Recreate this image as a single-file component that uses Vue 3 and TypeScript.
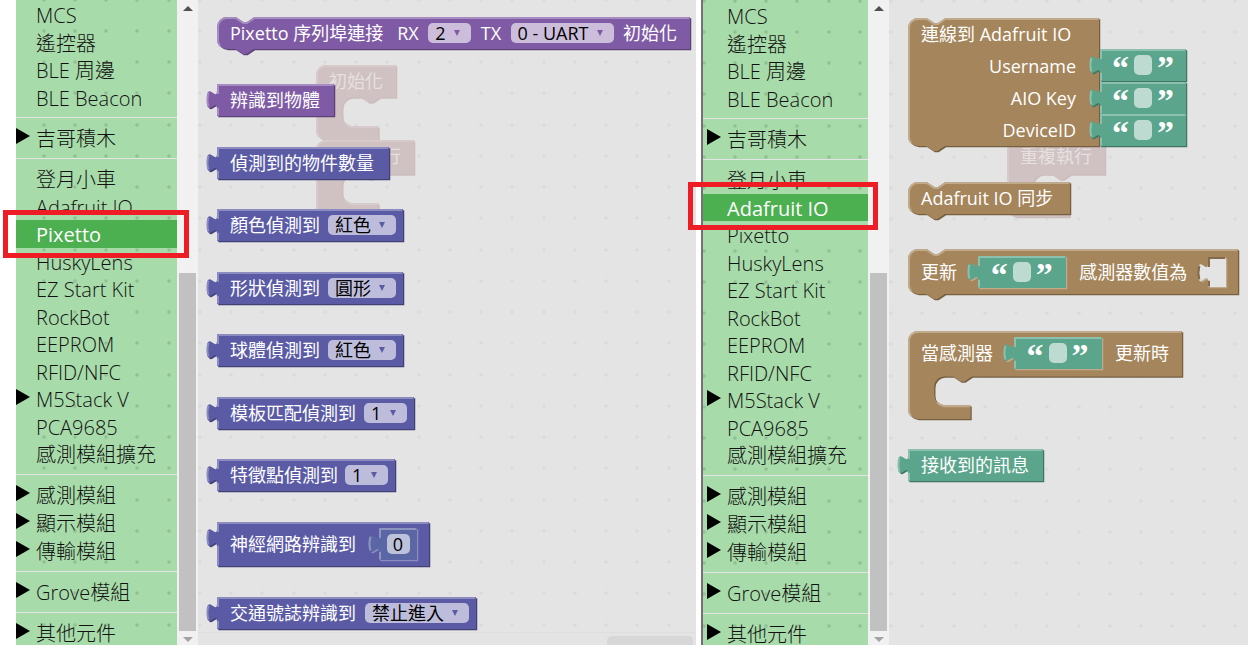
<script setup lang="ts">
import { h } from 'vue'

interface Item { name: string; parent?: boolean }
interface Part {
  kind: 'label' | 'select' | 'text' | 'number' | 'slot'
  value?: string
  nested?: boolean
}
interface Block {
  x: number
  y: number
  w: number
  h: number
  shape: 'stack' | 'value' | 'loop'
  tone: string
  parts: Part[]
  rows?: string[]
}
interface Ghost { x: number; y: number; w: number; h: number; text: string }
interface Panel {
  id: string
  selected: string
  dotX: number
  dotY: number
  blocks: Block[]
  ghosts: Ghost[]
}

const SCALE = 1.25

const groups: Item[][] = [
  [{ name: 'MCS' }, { name: '遙控器' }, { name: 'BLE 周邊' }, { name: 'BLE Beacon' }],
  [{ name: '吉哥積木', parent: true }],
  [
    { name: '登月小車' }, { name: 'Adafruit IO' }, { name: 'Pixetto' }, { name: 'HuskyLens' },
    { name: 'EZ Start Kit' }, { name: 'RockBot' }, { name: 'EEPROM' }, { name: 'RFID/NFC' },
    { name: 'M5Stack V', parent: true }, { name: 'PCA9685' }, { name: '感測模組擴充' },
  ],
  [{ name: '感測模組', parent: true }, { name: '顯示模組', parent: true }, { name: '傳輸模組', parent: true }],
  [{ name: 'Grove模組', parent: true }],
  [{ name: '其他元件', parent: true }],
]

const label = (value: string): Part => ({ kind: 'label', value })
const pick = (value: string): Part => ({ kind: 'select', value })
const value = (y: number, w: number, parts: Part[], tone = 'blue', height = 32): Block =>
  ({ x: 19, y, w, h: height, shape: 'value', tone, parts })
const quoted = (y: number): Block =>
  ({ x: 211, y, w: 86, h: 32, shape: 'value', tone: 'green', parts: [{ kind: 'text' }] })

const panels: Panel[] = [
  {
    id: 'pixetto',
    selected: 'Pixetto',
    dotX: 28,
    dotY: 0,
    ghosts: [
      { x: 118, y: 65, w: 80, h: 75, text: '初始化' },
      { x: 118, y: 140, w: 98, h: 77, text: '重複執行' },
    ],
    blocks: [
      {
        x: 19, y: 17, w: 473, h: 32, shape: 'stack', tone: 'purple',
        parts: [label('Pixetto 序列埠連接   RX'), pick('2'), label('TX'), pick('0 - UART'), label('初始化')],
      },
      value(84, 117, [label('辨識到物體')], 'purple'),
      value(147, 172, [label('偵測到的物件數量')]),
      value(209, 186, [label('顏色偵測到'), pick('紅色')]),
      value(272, 186, [label('形狀偵測到'), pick('圓形')]),
      value(334, 186, [label('球體偵測到'), pick('紅色')]),
      value(397, 197, [label('模板匹配偵測到'), pick('1')]),
      value(459, 178, [label('特徵點偵測到'), pick('1')]),
      value(522, 212, [label('神經網路辨識到'), { kind: 'number', value: '0' }], 'blue', 44),
      value(597, 259, [label('交通號誌辨識到'), pick('禁止進入')]),
    ],
  },
  {
    id: 'adafruit',
    selected: 'Adafruit IO',
    dotX: 1,
    dotY: 1,
    ghosts: [{ x: 118, y: 140, w: 98, h: 77, text: '重複執行' }],
    blocks: [
      {
        x: 19, y: 18, w: 191, h: 128, shape: 'stack', tone: 'brown', parts: [],
        rows: ['連線到 Adafruit IO', 'Username', 'AIO Key', 'DeviceID'],
      },
      quoted(49),
      quoted(82),
      quoted(114),
      { x: 19, y: 182, w: 162, h: 32, shape: 'stack', tone: 'brown', parts: [label('Adafruit IO 同步')] },
      {
        x: 19, y: 249, w: 330, h: 45, shape: 'stack', tone: 'brown',
        parts: [label('更新'), { kind: 'text', nested: true }, label('感測器數值為'), { kind: 'slot' }],
      },
      {
        x: 19, y: 331, w: 274, h: 88, shape: 'loop', tone: 'brown',
        parts: [label('當感測器'), { kind: 'text', nested: true }, label('更新時')],
      },
      value(449, 135, [label('接收到的訊息')], 'green'),
    ],
  },
]

const NOTCH = 'l6,4 3,0 6,-4'
const NOTCH_BACK = 'l-6,4 -3,0 -6,-4'
const TAB = 'V20 c0,-10 -8,8 -8,-7.5 s8,2.5 8,-7.5'

function outline(shape: string, w: number, ht: number): string {
  if (shape === 'value') return `M0,0 H${w} V${ht} H0 ${TAB} z`
  if (shape === 'loop') {
    return `M0,8 A8,8 0 0 1 8,0 H${w} V${ht - 34} H51 ${NOTCH_BACK} H29 a8,8 0 0 0 -8,8 v7 a8,8 0 0 0 8,8 H50 V${ht} H8 a8,8 0 0 1 -8,-8 z`
  }
  return `M0,8 A8,8 0 0 1 8,0 H15 ${NOTCH} H${w} V${ht} H29.5 ${NOTCH_BACK} H8 a8,8 0 0 1 -8,-8 z`
}

function shine(shape: string, w: number, ht: number): string {
  if (shape === 'value') {
    return `M0.8,${ht - 0.5} V19 M-6.9,18 q-1.5,-5.5 0,-11 M0.8,8 V0.8 H${w - 0.5}`
  }
  const left = `M2.5,${ht - 2.5} A7.5,7.5 0 0 1 0.8,${ht - 8} V8 A7.2,7.2 0 0 1 8,0.8`
  if (shape === 'loop') {
    return `${left} H${w - 0.5} M23.4,${ht - 13.4} a8.5,8.5 0 0 0 5.6,3.2 H49.5`
  }
  return `${left} H15 ${NOTCH} H${w - 0.5}`
}

/* Bevelled block body: dark edge, fill and a light top-left rim. */
const Shape = (p: { kind: string; w: number; h: number }) => {
  const w = p.w / SCALE
  const ht = p.h / SCALE
  const d = outline(p.kind, w, ht)
  return h('svg', { class: 'shape', width: p.w, height: p.h, 'aria-hidden': 'true' }, [
    h('g', { transform: `scale(${SCALE})` }, [
      h('path', { d, class: 'edge', transform: 'translate(1,1)' }),
      h('path', { d, class: 'fill' }),
      h('path', { d: shine(p.kind, w, ht), class: 'shine' }),
    ]),
  ])
}
Shape.props = ['kind', 'w', 'h']

const dots: [number, number][] = []
for (const x of [2, 33, 64, 95]) for (const y of [2, 33, 64, 95]) dots.push([x, y])

const place = (o: { x: number; y: number; w: number; h: number }) =>
  ({ left: `${o.x}px`, top: `${o.y}px`, width: `${o.w}px`, height: `${o.h}px` })
</script>

<template>
  <main class="page">
    <section v-for="p in panels" :key="p.id" class="panel" :class="p.id">
      <svg class="grid" aria-hidden="true">
        <defs>
          <pattern :id="`dots-${p.id}`" :x="p.dotX - 2" :y="p.dotY - 2" width="125" height="125" patternUnits="userSpaceOnUse">
            <circle v-for="([x, y], i) in dots" :key="i" :cx="x" :cy="y" r="1.8" />
          </pattern>
        </defs>
        <rect width="100%" height="100%" :fill="`url(#dots-${p.id})`" />
      </svg>

      <nav class="toolbox">
        <ul v-for="(g, gi) in groups" :key="gi" class="group">
          <li v-for="it in g" :key="it.name" :class="{ selected: it.name === p.selected }">
            <button type="button" class="item">
              <svg v-if="it.parent" class="tri" width="14" height="16" aria-hidden="true"><path d="M0,0 L14,8 L0,16 z" /></svg>
              {{ it.name }}
            </button>
          </li>
        </ul>
      </nav>

      <div class="scroll" aria-hidden="true">
        <svg class="up" width="10" height="6"><path d="M0,6 L5,1 L10,6 z" /></svg>
        <div class="thumb"></div>
        <svg class="down" width="10" height="6"><path d="M0,0 L5,5 L10,0 z" /></svg>
      </div>

      <div class="canvas">
        <div v-for="g in p.ghosts" :key="g.y" class="block ghost" :style="place(g)">
          <Shape kind="loop" :w="g.w" :h="g.h" />
          <div class="parts"><span class="label">{{ g.text }}</span></div>
        </div>

        <div v-for="(b, bi) in p.blocks" :key="bi" class="block" :class="[b.tone, b.shape]" :style="place(b)">
          <Shape :kind="b.shape" :w="b.w" :h="b.h" />
          <div v-if="b.rows" class="rows">
            <span v-for="r in b.rows" :key="r" class="label">{{ r }}</span>
          </div>
          <div v-else class="parts" :class="`ends-${b.parts[b.parts.length - 1].kind}`">
            <template v-for="(part, pi) in b.parts" :key="pi">
              <span v-if="part.kind === 'label'" class="label">{{ part.value }}</span>
              <span v-else-if="part.kind === 'select'" class="field">
                <select :aria-label="b.parts[0].value"><option>{{ part.value }}</option></select>
                <svg class="caret" width="8" height="7" aria-hidden="true"><path d="M1,0 H7 L4,6 z" /></svg>
              </span>
              <span v-else-if="part.kind === 'number'" class="inner indigo">
                <Shape kind="value" :w="38" :h="32" />
                <input class="num" type="text" :value="part.value" :aria-label="b.parts[0].value">
              </span>
              <span v-else-if="part.kind === 'text'" class="string" :class="{ 'inner green': part.nested }">
                <Shape v-if="part.nested" kind="value" :w="88" :h="32" />
                <span class="quote">“</span>
                <input class="txt" type="text" aria-label="文字">
                <span class="quote">”</span>
              </span>
              <span v-else class="inner slot"><Shape kind="value" :w="18" :h="30" /></span>
            </template>
          </div>
        </div>
      </div>
    </section>
  </main>
</template>

<style>
body { margin: 0; background: #fff; }
</style>

<style scoped>
.page {
  display: flex;
  gap: 5px;
  height: 100vh;
  box-sizing: border-box;
  padding: 0 0 1px 16px;
  overflow: hidden;
  font-family: "Open Sans", "Noto Sans CJK TC", sans-serif;
  font-weight: 300;
}
.panel {
  position: relative;
  display: flex;
  min-width: 0;
  background: linear-gradient(90deg, #a8dbaa 182px, #e4e4e4 182px);
}
.pixetto { flex: 680 1 0; }
.adafruit { flex: 545 1 0; border-left: 2px solid #77707c; }
.grid { position: absolute; inset: 0; width: 100%; height: 100%; fill: rgba(0, 0, 0, .13); }

.toolbox { position: relative; z-index: 2; flex: 0 0 161px; }
.adafruit .toolbox { flex-basis: 165px; }
.group { margin: 0; padding: 6px 0; list-style: none; border-top: 1px solid #e4e4e4; }
.group:first-child { border-top: 0; padding-top: 1px; }
.adafruit .group:first-child { padding-top: 2px; }
.group li { position: relative; height: 27px; }
.group li:nth-child(odd), .group:nth-child(4) li { height: 28px; }
.item {
  position: relative;
  display: block;
  width: 100%;
  height: 100%;
  padding: 0 0 0 20px;
  border: 0;
  background: none;
  color: #111;
  font: inherit;
  font-size: 20px;
  line-height: 30px;
  text-align: left;
  white-space: nowrap;
}
.adafruit .item { padding-left: 24px; }
.tri { position: absolute; left: 0; top: 4px; }
.adafruit .tri { left: 4px; }
.selected { background: #4caf50; }
.selected .item { color: #fff; font-weight: 400; }
.selected::after {
  content: "";
  position: absolute;
  z-index: 5;
  inset: -10px -12px -10px -13px;
  border: 5px solid #ee1c24;
  pointer-events: none;
}
.adafruit .selected::after { inset: -12px -10px -9px -15px; }

.scroll {
  position: relative;
  z-index: 1;
  display: flex;
  flex-direction: column;
  align-items: center;
  flex: 0 0 21px;
  background: #f1f1f1;
}
.up { margin-top: 5px; fill: #505050; }
.thumb { width: 17px; flex: 1; margin: 262px 0 6px; background: #c1c1c1; }
.down { margin-bottom: 2px; fill: #a3a3a3; }

.canvas {
  position: relative;
  z-index: 1;
  flex: 1;
  min-width: 0;
  background: rgba(228, 228, 228, .7);
  font-weight: 400;
}
.pixetto .canvas::before {
  content: "";
  position: absolute;
  left: 0;
  right: 0;
  bottom: 12px;
  height: 1px;
  background: #dedede;
}
.pixetto .canvas::after {
  content: "";
  position: absolute;
  right: 3px;
  bottom: 0;
  width: 86px;
  height: 9px;
  border-radius: 5px 5px 0 0;
  background: #d7d7d7;
}

.block { position: absolute; color: #fff; }
.shape { position: absolute; left: 0; top: 0; overflow: visible; }
.shape :deep(.edge) { fill: var(--edge); }
.shape :deep(.fill) { fill: var(--tone); }
.shape :deep(.shine) { fill: none; stroke: var(--rim); stroke-width: 1.6; }
.purple { --tone: #805ba5; --edge: #5b4276; --rim: #a68cc0; }
.blue { --tone: #5b5ba5; --edge: #414176; --rim: #8c8cc0; }
.indigo { --tone: #5b67a5; --edge: #8c8cc0; --rim: #8c95c0; }
.brown { --tone: #a5855b; --edge: #765f41; --rim: #c0aa8c; }
.green { --tone: #5ba58c; --edge: #417664; --rim: #8cc0ae; }
.ghost { --tone: #d0c2c2; --edge: #cbbdbd; --rim: #d6caca; color: #e6e0e0; }
.slot { --tone: #e4e4e4; --edge: #c0aa8c; --rim: #846a49; }
.brown .inner.green { --edge: #c0aa8c; margin: 0 -3px 0 4px; }

.parts {
  position: relative;
  display: flex;
  align-items: center;
  justify-content: space-between;
  box-sizing: border-box;
  height: 100%;
  padding: 0 13px;
}
.ends-select { padding-right: 7px; }
.ends-number, .ends-slot { padding-right: 12px; }
.ends-text { padding: 0; justify-content: center; }
.loop .parts { height: 43px; }
.ghost .parts { height: 32px; }
.label { font-size: 18px; line-height: 24px; white-space: pre; }
.rows { position: relative; display: grid; grid-auto-rows: 32px; align-items: center; padding: 0 23px 0 13px; text-align: right; }
.rows .label:first-child { text-align: left; }

.field { position: relative; display: inline-flex; }
.field select {
  appearance: none;
  height: 20px;
  padding: 0 25px 0 7px;
  border: 0;
  border-radius: 5px;
  background: rgba(255, 255, 255, .6);
  color: #000;
  font: inherit;
  font-size: 18px;
  line-height: 20px;
}
.caret { position: absolute; right: 10px; top: 7px; fill: var(--tone); pointer-events: none; }

.inner { position: relative; display: flex; align-items: center; justify-content: center; height: 32px; }
.indigo { width: 38px; }
.slot { width: 18px; height: 30px; margin-left: 4px; }
.num, .txt {
  position: relative;
  box-sizing: border-box;
  height: 20px;
  padding: 0;
  border: 0;
  border-radius: 5px;
  background: rgba(255, 255, 255, .6);
  color: #000;
  font: inherit;
  font-size: 18px;
  line-height: 20px;
  text-align: center;
}
.num { width: 23px; }
.txt { width: 18px; }
.string { position: relative; display: flex; align-items: center; justify-content: center; gap: 5px; width: 88px; }
.quote {
  position: relative;
  height: 32px;
  width: 17px;
  font: 700 34px/38px "Liberation Serif", serif;
}
</style>
